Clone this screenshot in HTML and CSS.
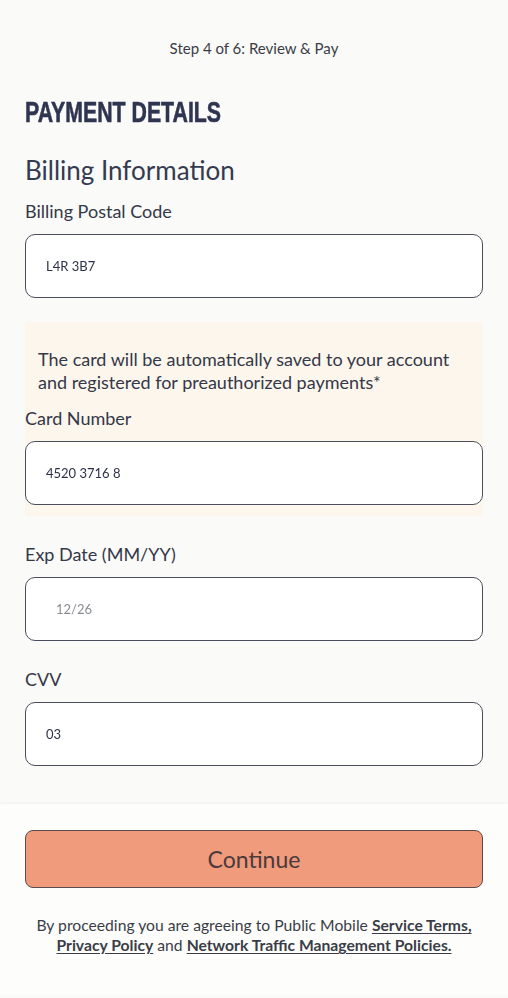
FILE: index.html
```html
<!DOCTYPE html>
<html lang="en">

<head>
    <meta charset="UTF-8">
    <meta name="viewport" content="width=device-width, initial-scale=1.0">
    <title>Public Mobile - Review &amp; Pay</title>
    <link rel="stylesheet" href="styles.css">
</head>

<body>
    <main class="page">
        <p class="step">Step 4 of 6: Review &amp; Pay</p>

        <h1 class="title"><span>Payment Details</span></h1>
        <h2 class="subtitle">Billing Information</h2>

        <div class="field">
            <label class="label" for="postal">Billing Postal Code</label>
            <input class="input" id="postal" type="text" value="L4R 3B7">
        </div>

        <!-- Notice box wraps the card number field -->
        <div class="notice">
            <p class="notice-text">The card will be automatically saved to your account and registered for preauthorized payments*</p>
            <div class="field">
                <label class="label" for="card">Card Number</label>
                <input class="input" id="card" type="text" value="4520 3716 8">
            </div>
        </div>

        <div class="field">
            <label class="label" for="exp">Exp Date (MM/YY)</label>
            <input class="input input-light" id="exp" type="text" value="12/26">
        </div>

        <div class="field">
            <label class="label" for="cvv">CVV</label>
            <input class="input" id="cvv" type="text" value="03">
        </div>
    </main>

    <footer class="footer">
        <button class="continue-btn" type="button">Continue</button>
        <p class="legal">
            By proceeding you are agreeing to Public Mobile <a href="#">Service Terms,</a><br>
            <a href="#">Privacy Policy</a> and <a href="#">Network Traffic Management Policies.</a>
        </p>
    </footer>
</body>

</html>
```

FILE: styles.css
```css
body {
    background-color: #fafaf8;
    font-family: Lato, "Open Sans", sans-serif;
    color: #343848;
    margin: 0;
    padding: 0;
}

.page {
    padding: 38px 25px 38px;
}

.step {
    margin: 0;
    font-size: 15px;
    line-height: 20px;
    text-align: center;
    color: #3a3d48;
}

.title {
    margin: 36px 0 0;
    font-family: "Liberation Sans", Arial, sans-serif;
    font-weight: 700;
    font-size: 30px;
    line-height: 36px;
    text-transform: uppercase;
    color: #2f3550;
}

/* condensed display face, squeezed from a regular bold */
.title span {
    display: inline-block;
    transform: scaleX(0.71);
    transform-origin: left center;
    -webkit-text-stroke: 0.6px #2f3550;
}

.subtitle {
    margin: 24px 0 0;
    font-weight: 400;
    font-size: 26px;
    line-height: 32px;
    color: #343a50;
}

.field {
    margin-top: 14px;
}

.label {
    display: block;
    font-size: 18px;
    line-height: 22px;
    margin-bottom: 12px;
}

.input {
    display: block;
    box-sizing: border-box;
    width: 100%;
    height: 64px;
    padding: 0 20px;
    border: 1.5px solid #4a4d5a;
    border-radius: 10px;
    background-color: #fff;
    font-family: inherit;
    font-size: 13px;
    color: #2d3148;
    filter: blur(0.6px);
}

.input-light {
    padding-left: 30px;
    color: #8a8c94;
}

.notice {
    margin-top: 24px;
    padding: 26px 0 11px;
    background-color: #fdf6ed;
}

.notice-text {
    margin: 0;
    padding: 0 20px 0 13px;
    font-size: 18px;
    line-height: 23px;
}

.notice .field {
    margin-top: 13px;
}

.notice + .field,
.notice + .field + .field {
    margin-top: 27px;
}

.footer {
    background-color: #fdfdfb;
    box-shadow: 0 -1px 3px rgba(0, 0, 0, 0.04);
    padding: 26px 25px 40px;
}

.continue-btn {
    display: block;
    width: 100%;
    height: 58px;
    border: 1.5px solid #5a4c4c;
    border-radius: 8px;
    background-color: #f19b7d;
    font-family: inherit;
    font-size: 23px;
    color: #4a3a3c;
    cursor: pointer;
}

.legal {
    margin: 27px 0 0;
    font-size: 15.7px;
    line-height: 20px;
    text-align: center;
    color: #3a3d48;
}

.legal a {
    font-weight: 700;
    color: #3a3d48;
    text-decoration: underline;
    text-underline-offset: 2px;
}
```
